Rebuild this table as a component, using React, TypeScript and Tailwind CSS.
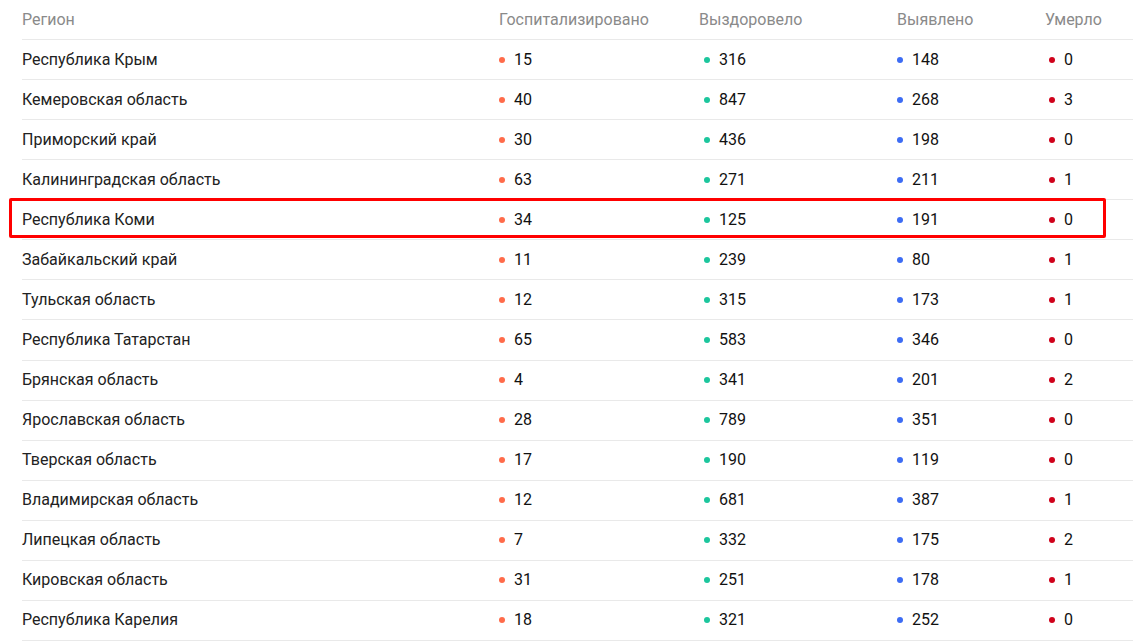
import React from "react";

type Row = {
  region: string;
  hospitalized: number;
  recovered: number;
  detected: number;
  died: number;
};

const rows: Row[] = [
  { region: "Республика Крым", hospitalized: 15, recovered: 316, detected: 148, died: 0 },
  { region: "Кемеровская область", hospitalized: 40, recovered: 847, detected: 268, died: 3 },
  { region: "Приморский край", hospitalized: 30, recovered: 436, detected: 198, died: 0 },
  { region: "Калининградская область", hospitalized: 63, recovered: 271, detected: 211, died: 1 },
  { region: "Республика Коми", hospitalized: 34, recovered: 125, detected: 191, died: 0 },
  { region: "Забайкальский край", hospitalized: 11, recovered: 239, detected: 80, died: 1 },
  { region: "Тульская область", hospitalized: 12, recovered: 315, detected: 173, died: 1 },
  { region: "Республика Татарстан", hospitalized: 65, recovered: 583, detected: 346, died: 0 },
  { region: "Брянская область", hospitalized: 4, recovered: 341, detected: 201, died: 2 },
  { region: "Ярославская область", hospitalized: 28, recovered: 789, detected: 351, died: 0 },
  { region: "Тверская область", hospitalized: 17, recovered: 190, detected: 119, died: 0 },
  { region: "Владимирская область", hospitalized: 12, recovered: 681, detected: 387, died: 1 },
  { region: "Липецкая область", hospitalized: 7, recovered: 332, detected: 175, died: 2 },
  { region: "Кировская область", hospitalized: 31, recovered: 251, detected: 178, died: 1 },
  { region: "Республика Карелия", hospitalized: 18, recovered: 321, detected: 252, died: 0 },
];

function Stat({ value, dot, className = "" }: { value: number; dot: string; className?: string }) {
  return (
    <div className={`flex items-center gap-[9px] ${className}`.trim()}>
      <span className={`h-[6px] w-[6px] rounded-full ${dot}`} />
      <span className="text-[16px] text-[#111111]">{value}</span>
    </div>
  );
}

export default function App() {
  return (
    <div
      className="relative h-[641px] w-[1133px] overflow-hidden bg-white"
      style={{ fontFamily: "Roboto, 'Liberation Sans', sans-serif" }}
    >
      <div className="ml-[22px]">
        <div className="flex h-[40px] items-center border-b border-[#e9e9e9] pt-[1px] text-[16px] text-[#8a8a8a]">
          <div className="w-[477px]">Регион</div>
          <div className="w-[200px]">Госпитализировано</div>
          <div className="w-[198px]">Выздоровело</div>
          <div className="w-[148px]">Выявлено</div>
          <div className="flex-1">Умерло</div>
        </div>

        {rows.map((row) => (
          <div key={row.region} className="flex h-[40.07px] items-center border-b border-[#e9e9e9]">
            <div className="w-[477px] text-[16px] text-[#222222]">{row.region}</div>
            <div className="w-[200px]">
              <Stat value={row.hospitalized} dot="bg-[#ff6b4a]" />
            </div>
            <div className="w-[198px]">
              <Stat value={row.recovered} dot="bg-[#1cc69d]" className="pl-[5px]" />
            </div>
            <div className="w-[148px]">
              <Stat value={row.detected} dot="bg-[#3d6cf4]" />
            </div>
            <div className="flex-1">
              <Stat value={row.died} dot="bg-[#d0021b]" className="pl-[4px]" />
            </div>
          </div>
        ))}
      </div>

      {/* highlight around Республика Коми */}
      <div className="pointer-events-none absolute left-[9px] top-[198px] h-[40px] w-[1097px] rounded-[2px] border-[3px] border-[#ff0000]" />
    </div>
  );
}
